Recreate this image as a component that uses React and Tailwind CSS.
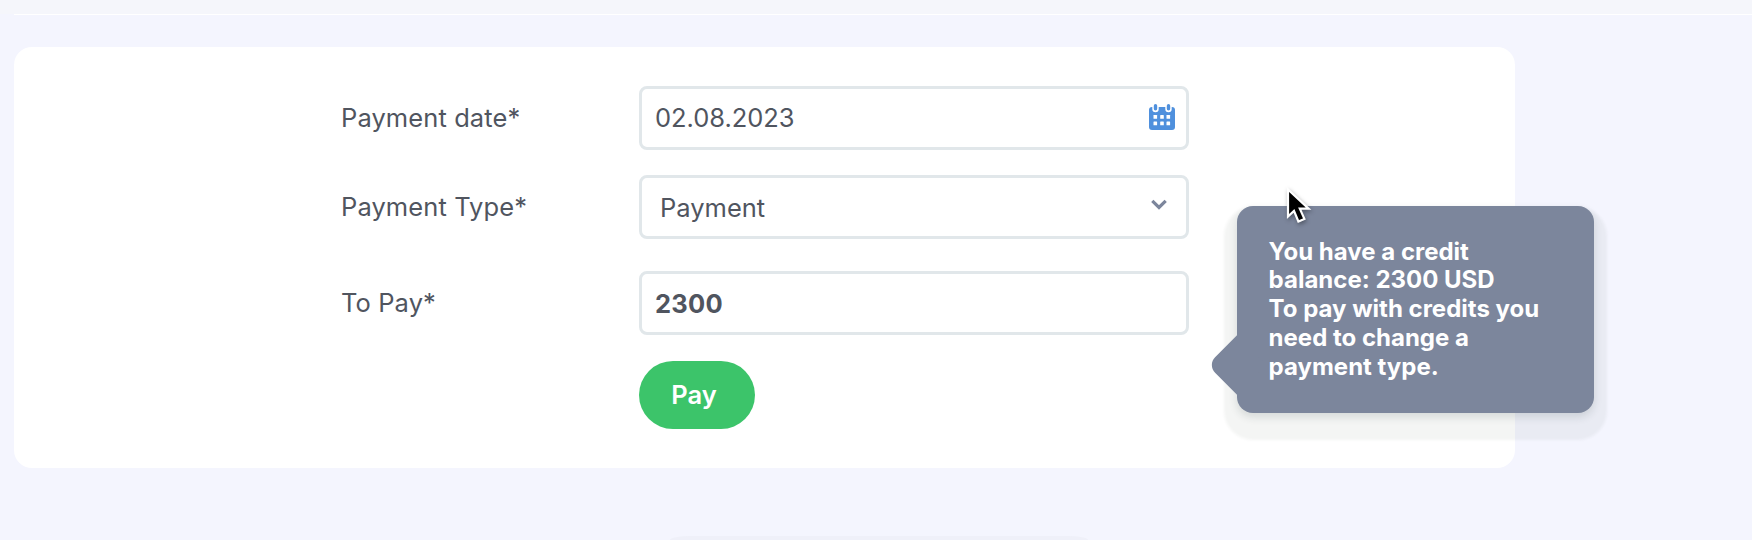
function Field({ children, className = "" }) {
  return (
    <div className={`flex h-16 w-[550px] items-center justify-between rounded-lg border-[3px] border-[#e1e7ea] bg-white ${className}`}>
      {children}
    </div>
  );
}

function Row({ label, children, className = "" }) {
  return (
    <div className={`flex items-center ${className}`}>
      <div className="w-[298px] tracking-[0.1px] whitespace-nowrap">{label}</div>
      {children}
    </div>
  );
}

function CalendarIcon() {
  return (
    <svg className="-mt-0.5" width="28" height="28" viewBox="0 0 28 28" fill="none">
      <rect x="1" y="4" width="26" height="23" rx="3" fill="#4f90dd" />
      <g stroke="#fff" strokeWidth="6.4" strokeLinecap="round">
        <path d="M7.5 3v3M20.5 3v3" />
      </g>
      <g stroke="#4f90dd" strokeWidth="3.4" strokeLinecap="round">
        <path d="M7.5 2.7v3M20.5 2.7v3" />
      </g>
      <g fill="#fff">
        <rect x="5.5" y="12" width="3.6" height="3.8" rx=".4" />
        <rect x="12.2" y="12" width="3.6" height="3.8" rx=".4" />
        <rect x="18.5" y="12" width="3.6" height="3.8" rx=".4" />
        <rect x="5.5" y="18.5" width="3.6" height="3.8" rx=".4" />
        <rect x="12.2" y="18.5" width="3.6" height="3.8" rx=".4" />
        <rect x="18.5" y="18.5" width="3.6" height="3.8" rx=".4" />
      </g>
    </svg>
  );
}

function CreditTooltip() {
  return (
    <div className="absolute top-[159px] left-[1223px] h-[207px] w-[357px] rounded-2xl bg-[#7c869c] shadow-[0_4px_8px_rgba(30,50,50,0.14),0_14px_3px_13px_rgba(30,60,40,0.05)]">
      <div className="absolute top-[138px] -left-[21px] size-[42px] rotate-45 rounded-bl-[11px] bg-[#7c869c]" />
      <p className="relative pt-[31.6px] pl-[31.6px] text-2xl leading-[28.8px] font-bold whitespace-nowrap text-white">
        You have a credit<br />
        balance: 2300 USD<br />
        To pay with credits you<br />
        need to change a<br />
        payment type.
      </p>
    </div>
  );
}

function Pointer() {
  return (
    <svg className="absolute top-[138px] left-[1270px] drop-shadow-[1px_2px_2px_rgba(0,0,0,0.35)]" width="30" height="42" viewBox="0 0 30 42">
      <path
        d="M4 4.5v27l6-5.6 4.4 10.6 6-2.6-4.6-10.2h8.8z"
        fill="#000" stroke="#fff" strokeWidth="2.2" strokeLinejoin="miter"
      />
    </svg>
  );
}

export default function App() {
  return (
    <div className="h-[540px] overflow-hidden bg-[#f4f5fe] font-[Inter,sans-serif] text-[25.5px] text-[#50555f]">
      <div className="h-3.5 bg-[#f5f6fb]" />
      <div className="ml-3.5 h-px bg-white" />
      <main className="relative mt-8 ml-3.5 h-[421px] w-[1501px] rounded-[18px] bg-white pt-[39px] pl-[327px]">
        <Row label="Payment date*">
          <Field className="pr-2.5 pl-[13px]">
            <span className="tracking-[-0.05px]">02.08.2023</span>
            <CalendarIcon />
          </Field>
        </Row>
        <Row label="Payment Type*" className="mt-[25px]">
          <Field className="pr-[19px] pl-[18px]">
            <span className="pt-[3px]">Payment</span>
            <svg width="16" height="12" viewBox="0 0 16 12" fill="none" className="-mt-1">
              <path d="M1.3 1.8 8 8.5 14.7 1.8" stroke="#7c869c" strokeWidth="3.2" />
            </svg>
          </Field>
        </Row>
        <Row label="To Pay*" className="mt-8">
          <Field className="pl-[13px] font-bold">
            <span className="pt-[3px] tracking-[0.3px]">2300</span>
          </Field>
        </Row>
        <button className="mt-[26px] ml-[298px] h-[68px] w-[116px] rounded-full bg-[#3cc46a] pr-1.5 text-[25.5px] font-semibold text-white">
          Pay
        </button>
        <CreditTooltip />
        <Pointer />
      </main>
      <div className="mt-[68px] ml-[670px] h-1 w-[418px] rounded-[20px_20px_0_0/4px_4px_0_0] bg-[#eff0f9]" />
    </div>
  );
}
